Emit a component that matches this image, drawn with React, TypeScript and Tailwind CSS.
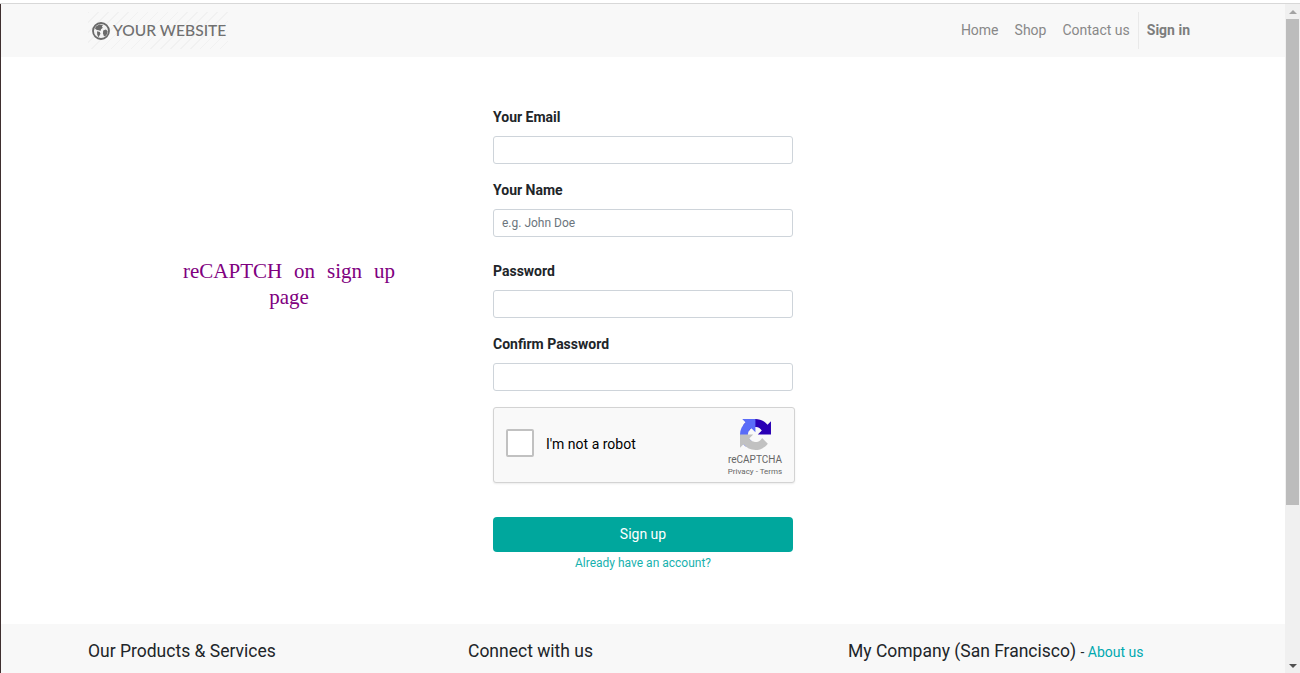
function Field({ label, placeholder, className }: { label: string; placeholder?: string; className?: string }) {
	return (
		<div className={"flex flex-col " + (className ?? "")}>
			<label className="mb-[8px] h-[21px] text-[14px] leading-[21px] font-bold text-[#212529]">{label}</label>
			<input
				placeholder={placeholder}
				className="h-[28px] w-[300px] rounded-[3px] border border-[#ced4da] bg-white px-[8px] text-[12px] outline-none placeholder:text-[#6c757d]"
			/>
		</div>
	);
}

function Globe() {
	return (
		<svg viewBox="0 0 20 20" className="h-[18px] w-[18px] shrink-0">
			<circle cx="10" cy="10" r="8.9" fill="#f2f2f2" stroke="#6a6a6a" strokeWidth="2" />
			<path d="M4 5.2 L8 2.8 L12.2 3.2 L11 5 L12 6.4 L10 8 L9.4 10 L7.6 9.2 L5.4 9 L3.4 7.6 Z" fill="#6a6a6a" />
			<path d="M5.6 10.4 L8.6 11 L9.4 13 L8 15.6 L7 17 L5.8 14 Z" fill="#6a6a6a" />
			<path d="M12.4 9.4 L15.4 8.4 L17.4 10 L17 13 L14.6 16 L13 15.4 L12.2 12.4 Z" fill="#6a6a6a" />
		</svg>
	);
}

function RecaptchaLogo() {
	return (
		<svg viewBox="0 0 64 64" className="h-[31px] w-[31px]">
			<path
				d="M64 31.955l-.033-1.37V4.687l-7.16 7.16C50.948 4.674 42.033.093 32.05.093c-10.4 0-19.622 4.96-25.458 12.64l11.736 11.86a15.55 15.55 0 0 1 4.754-5.334c2.05-1.6 4.952-2.906 8.968-2.906.485 0 .86.057 1.135.163 4.976.393 9.288 3.14 11.828 7.124l-8.307 8.307 32.294.007"
				fill="#2a00b5"
			/>
			<path
				d="M31.862.094l-1.37.033H4.594l7.16 7.16C4.58 13.147 0 22.06 0 32.046c0 10.4 4.96 19.622 12.64 25.458L24.5 45.768a15.55 15.55 0 0 1-5.334-4.754c-1.6-2.05-2.906-4.952-2.906-8.968 0-.485.057-.86.163-1.135.393-4.976 3.14-9.288 7.124-11.828l8.307 8.307L31.862.094"
				fill="#5a6cf8"
			/>
			<path
				d="M.001 32.045l.033 1.37v25.898l7.16-7.16c5.86 7.173 14.774 11.754 24.76 11.754 10.4 0 19.622-4.96 25.458-12.64l-11.736-11.86a15.55 15.55 0 0 1-4.754 5.334c-2.05 1.6-4.952 2.906-8.968 2.906-.485 0-.86-.057-1.135-.163-4.976-.393-9.288-3.14-11.828-7.124l8.307-8.307-32.294-.007"
				fill="#c1c1c1"
			/>
		</svg>
	);
}

function Recaptcha() {
	return (
		<div className="mt-[16px] flex h-[76px] w-[302px] items-start rounded-[3px] border border-[#d3d3d3] bg-[#f9f9f9] pl-[12px] shadow-[0_1px_2px_rgba(0,0,0,0.08)]">
			<div className="mt-[21px] h-[28px] w-[28px] rounded-[2px] border-2 border-[#c1c1c1] bg-white" />
			<span className="mt-[26px] ml-[12px] text-[14px] leading-[20px] text-black">I'm not a robot</span>
			<div className="mt-[8px] mr-[4px] ml-auto flex w-[70px] flex-col items-center pt-[3px]">
				<RecaptchaLogo />
				<span className="mt-[3px] text-[10px] leading-[13px] text-[#666]">reCAPTCHA</span>
				<span className="text-[8px] leading-[11px] text-[#666]">Privacy - Terms</span>
			</div>
		</div>
	);
}

export default function App() {
	return (
		<div className="flex h-[673px] w-[1300px] flex-col overflow-hidden bg-white font-['Roboto',sans-serif] text-[#212529]">
			<div className="h-[4px] shrink-0 border-b border-[#d8d8d8] bg-white" />
			<div className="flex min-h-0 flex-1 flex-row">
				<div className="w-px shrink-0 bg-[#3f2f2f]" />
				<div className="flex min-w-0 flex-1 flex-col">
					<nav className="flex h-[53px] shrink-0 items-center bg-[#f8f8f8] pr-[95px] pl-[87px]">
						<a className="flex h-[37px] w-[140px] items-center gap-[3px] bg-[repeating-linear-gradient(135deg,#f1f1f1_0px,#f1f1f1_1px,#f8f8f8_1px,#f8f8f8_7px)] pl-[4px] font-['Lato',sans-serif] text-[15.6px] font-medium whitespace-nowrap text-[#707070]">
							<Globe />
							<span>YOUR WEBSITE</span>
						</a>
						<div className="ml-auto flex h-[37px] items-center text-[14px] text-[#888]">
							<a className="mr-[16px]">Home</a>
							<a className="mr-[16px]">Shop</a>
							<a className="mr-[8px]">Contact us</a>
							<div className="h-[37px] w-px bg-[#e9e9e9]" />
							<a className="ml-[8px] font-bold text-[#7d7d7d]">Sign in</a>
						</div>
					</nav>
					<main className="flex h-[567px] shrink-0 flex-row bg-white pl-[182px]">
						<div className="w-[212px] pt-[201px]">
							<p className="font-['Liberation_Serif',serif] text-[21px] leading-[26px] text-[#800080] [text-align-last:center] [text-align:justify]">
								reCAPTCH on sign up page
							</p>
						</div>
						<div className="ml-[98px] flex w-[303px] flex-col pt-[50px]">
							<Field label="Your Email" />
							<Field label="Your Name" placeholder="e.g. John Doe" className="mt-[16px]" />
							<Field label="Password" className="mt-[24px]" />
							<Field label="Confirm Password" className="mt-[16px]" />
							<Recaptcha />
							<button className="mt-[34px] h-[35px] w-[300px] rounded-[4px] bg-[#00a79d] text-[14px] text-white">Sign up</button>
							<a className="mt-[2px] w-[300px] text-center text-[12px] leading-[18px] text-[#17b1ae]">Already have an account?</a>
						</div>
					</main>
					<footer className="grid flex-1 grid-cols-[380px_380px_1fr] bg-[#f8f8f8] pt-[14px] pl-[87px]">
						<h5 className="text-[17.5px] leading-[26px] font-normal">Our Products &amp; Services</h5>
						<h5 className="text-[17.5px] leading-[26px] font-normal">Connect with us</h5>
						<h5 className="text-[17.5px] leading-[26px] font-normal">
							My Company (San Francisco) <span className="text-[14px]">- </span>
							<a className="text-[14px] text-[#00a9b0]">About us</a>
						</h5>
					</footer>
				</div>
				<div className="relative flex w-[15px] shrink-0 flex-col items-center bg-[#f0f0f0]">
					<div className="mt-[6px] h-0 w-0 border-x-[4px] border-b-[4px] border-x-transparent border-b-[#a3a3a3]" />
					<div className="mt-[5px] h-[486px] w-[13px] bg-[#bcbcbc]" />
					<div className="mt-auto mb-[5px] h-0 w-0 border-x-[4px] border-t-[4px] border-x-transparent border-t-[#505050]" />
				</div>
			</div>
		</div>
	);
}
